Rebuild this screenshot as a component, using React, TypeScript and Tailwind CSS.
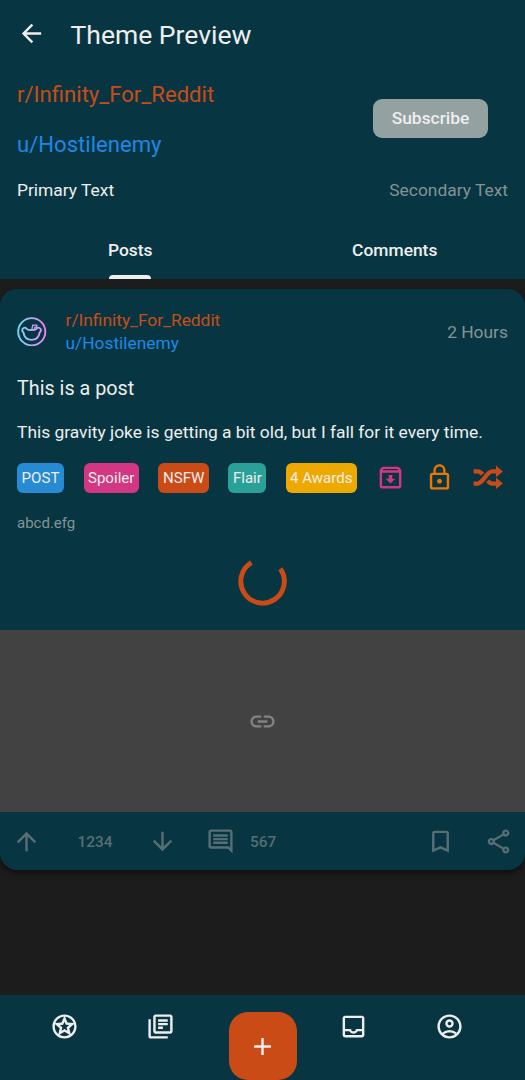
import React from "react";
import {
  MdArrowBack,
  MdArrowDownward,
  MdArrowUpward,
  MdBookmarkBorder,
  MdAdd,
  MdLink,
  MdLockOutline,
  MdOutlineAccountCircle,
  MdOutlineArchive,
  MdOutlineComment,
  MdOutlineInbox,
  MdOutlineLibraryBooks,
  MdOutlineShare,
  MdOutlineStars,
} from "react-icons/md";

function Avatar() {
  return (
    <svg viewBox="0 0 30 30" className="mb-px size-[29.5px]" fill="none" stroke="url(#avatar)" strokeWidth="1.9" strokeLinejoin="round" strokeLinecap="round">
      <defs>
        <linearGradient id="avatar" gradientUnits="userSpaceOnUse" x1="1" y1="15" x2="29" y2="15">
          <stop offset="0" stopColor="#68dcf4" />
          <stop offset="0.5" stopColor="#b4acf6" />
          <stop offset="1" stopColor="#f082f0" />
        </linearGradient>
      </defs>
      <circle cx="15" cy="15" r="13.8" />
      <path d="M9.8 12C8.6 10 5.2 10.8 5.3 13.4C5.4 14.8 6.4 15.4 6.7 16.2C7.4 21.4 10.4 23.2 14.8 23.2S22.2 21.4 22.9 16.2C23.2 15.4 24.3 14.8 24.4 13.4C24.5 10.8 21 10 19.8 12C18.6 13.2 17.6 13.4 14.8 13.4S11 13.2 9.8 12Z" />
      <path d="M15 13L16 8.2H20.2V10.2H18.2L17.6 12.6" strokeWidth="1.3" />
    </svg>
  );
}

function Crosspost() {
  return (
    <svg viewBox="0 0 30 24" className="mb-0.5 h-6 w-[30px] shrink-0" fill="none" stroke="#cb4b16" strokeWidth="4.4">
      <path d="M.6 18.6H4.4C10.6 18.6 13 6.4 19.4 6.4H24" />
      <path d="M.6 6.4H4.4C6.6 6.4 8.2 7.6 9.4 9.2M14.8 15.8C16 17.4 17.4 18.6 19.4 18.6H24" />
      <path d="M23 .6L29.8 6.4L23 12.2ZM23 12.6L29.8 18.4L23 24Z" fill="#cb4b16" stroke="none" />
    </svg>
  );
}

function Chip({ label, className }: { label: string; className: string }) {
  return (
    <span className={`flex h-[30px] shrink-0 items-center justify-center rounded-[6px] text-[15.1px] ${className}`}>
      {label}
    </span>
  );
}

export default function App() {
  return (
    <div className="flex h-[1080px] w-[525px] flex-col overflow-hidden bg-[#1c1c1c] font-['Roboto',sans-serif] text-[17.4px] whitespace-nowrap text-[#eeeeee]">
      <header className="h-[279px] shrink-0 bg-[#073642]">
        <div className="flex h-[69px] items-center pl-[17px]">
          <MdArrowBack className="mb-[2px] size-[29px]" />
          <h1 className="ml-[24.5px] text-[26.5px]">Theme Preview</h1>
        </div>
        <div className="flex items-center justify-between pr-[37px] pl-[17px]">
          <div className="text-[22.1px]">
            <p className="flex h-[50px] items-center pt-[2px] text-[#cb4b16]">r/Infinity_For_Reddit</p>
            <p className="flex h-[50px] items-center pt-[2px] text-[#1e88e5]">u/Hostilenemy</p>
          </div>
          <button className="mb-[2px] flex h-[39px] w-[115px] items-center justify-center rounded-[9px] bg-[#93a1a1] font-medium">
            Subscribe
          </button>
        </div>
        <div className="flex h-[42px] items-center justify-between px-[17px]">
          <span>Primary Text</span>
          <span className="text-[#839496]">Secondary Text</span>
        </div>
        <nav className="mt-[11px] grid h-[57px] grid-cols-2 font-medium">
          <div className="flex flex-col items-center">
            <span className="flex h-[53px] items-center pt-[4px] pr-[2px]">Posts</span>
            <span className="mr-[3px] h-1 w-[42px] rounded-t-[4px] bg-[#eeeeee]" />
          </div>
          <span className="flex items-center justify-center pl-[2px]">Comments</span>
        </nav>
      </header>

      <article className="mt-[10px] flex h-[581px] shrink-0 flex-col overflow-hidden rounded-[17px] bg-[#073642] pt-5 shadow-md shadow-black/40">
        <div className="flex h-[46px] items-center px-[17px]">
          <Avatar />
          <div className="ml-[19px] flex-1 text-[17.35px]">
            <p className="h-[23px] leading-[23px] text-[#cb4b16]">r/Infinity_For_Reddit</p>
            <p className="h-[23px] leading-[23px] text-[#1e88e5]">u/Hostilenemy</p>
          </div>
          <span className="text-[#839496]">2 Hours</span>
        </div>
        <h2 className="mt-[19px] px-[17px] text-[19.8px] leading-[30px]">This is a post</h2>
        <p className="mt-[15px] px-[17px] leading-[26px]">
          This gravity joke is getting a bit old, but I fall for it every time.
        </p>
        <div className="mt-[18px] flex h-[30px] items-center gap-[19.5px] px-[17px]">
          <Chip label="POST" className="w-[47px] bg-[#268bd2]" />
          <Chip label="Spoiler" className="w-[55.4px] bg-[#d33682]" />
          <Chip label="NSFW" className="w-[50.6px] bg-[#cb4b16]" />
          <Chip label="Flair" className="w-[37.8px] bg-[#2aa198]" />
          <Chip label="4 Awards" className="w-[71px] bg-[#eea900]" />
          <MdOutlineArchive className="mb-[2px] size-[29px] shrink-0 text-[#d33682]" />
          <MdLockOutline className="mb-[2px] size-[29px] shrink-0 text-[#ee7600]" />
          <Crosspost />
        </div>
        <p className="mt-5 px-[17px] text-[15px] leading-5 text-[#839496]">abcd.efg</p>
        <svg viewBox="0 0 50 50" className="mt-6 size-[49px] shrink-0 self-center" fill="none" stroke="#cb4b16" strokeWidth="5">
          <path d="M13.6 5.8A22.2 22.2 0 1 0 43.2 12" />
        </svg>
        <div className="mt-6 flex h-[182px] shrink-0 items-center justify-center bg-[#424242] text-[#828282]">
          <MdLink className="size-[29px]" />
        </div>
        <footer className="flex h-[58px] shrink-0 items-center pr-3 pl-3 text-[15.3px] font-medium text-[#586e75]">
          <MdArrowUpward className="size-[29px]" />
          <span className="w-[107px] pt-[2px] pl-px text-center">1234</span>
          <MdArrowDownward className="size-[29px]" />
          <MdOutlineComment className="ml-[29px] size-[29px]" />
          <span className="ml-[15px] pt-[2px]">567</span>
          <MdBookmarkBorder className="ml-auto size-[29px]" />
          <MdOutlineShare className="ml-[29.5px] size-[29px]" />
        </footer>
      </article>

      <footer className="mt-auto flex h-[85px] shrink-0 items-start bg-[#073642] pt-[17px] pl-[50px]">
        <MdOutlineStars className="size-[29px]" />
        <MdOutlineLibraryBooks className="ml-[67px] size-[29px]" />
        <button className="ml-[53.5px] flex size-[68px] items-center justify-center rounded-[19px] bg-[#cb4b16]">
          <MdAdd className="size-[29px]" />
        </button>
        <MdOutlineInbox className="ml-[42px] size-[29px]" />
        <MdOutlineAccountCircle className="ml-[67.5px] size-[29px]" />
      </footer>
    </div>
  );
}
